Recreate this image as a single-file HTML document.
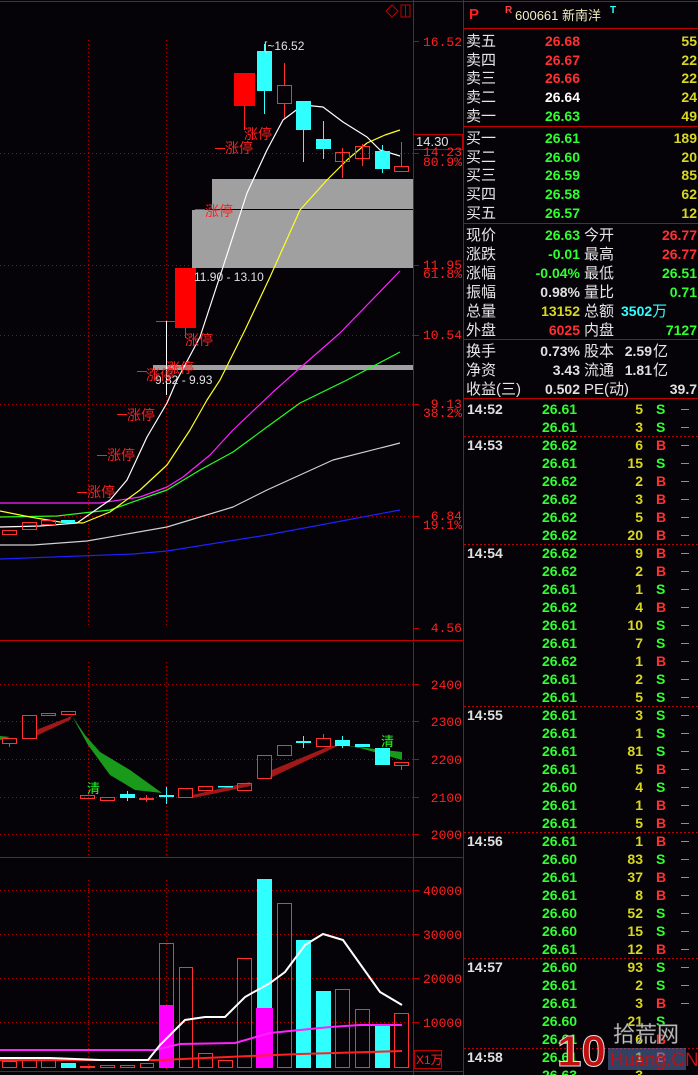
<!DOCTYPE html>
<html><head><meta charset="utf-8"><style>
html,body{margin:0;padding:0;background:#050308;}
svg{display:block}
text{font-family:"Liberation Sans","WenQuanYi Zen Hei",sans-serif;}
.cn{font-family:"WenQuanYi Zen Hei","Noto Sans CJK SC",sans-serif;font-size:15px;fill:#e6e6e6}
.n{font-family:"Liberation Sans",sans-serif;font-weight:bold;font-size:14px}
.ax{font-family:"Liberation Mono",monospace;font-size:13px;fill:#ff2020}
.zt{font-family:"WenQuanYi Zen Hei","Noto Sans CJK SC",sans-serif;font-size:14px;fill:#ff2020}
</style></head><body>
<svg width="698" height="1075" viewBox="0 0 698 1075" xmlns="http://www.w3.org/2000/svg">
<rect width="698" height="1075" fill="#050308"/>
<g stroke="#c00000" stroke-width="1" fill="none">
<line x1="0" y1="1.5" x2="698" y2="1.5"/>
<line x1="413.5" y1="0" x2="413.5" y2="1075"/>
<line x1="463.5" y1="0" x2="463.5" y2="1075"/>
<line x1="0" y1="640.5" x2="463" y2="640.5"/>
<line x1="0" y1="857.5" x2="463" y2="857.5"/>
<line x1="0" y1="1071.5" x2="463" y2="1071.5"/>
</g>
<g stroke="#b00000" stroke-width="1" stroke-dasharray="1,3" fill="none">
<line x1="0" y1="153.5" x2="413" y2="153.5"/>
<line x1="0" y1="265.5" x2="413" y2="265.5"/>
<line x1="0" y1="335.5" x2="413" y2="335.5"/>
<line x1="0" y1="404.5" x2="413" y2="404.5"/>
<line x1="0" y1="516.5" x2="413" y2="516.5"/>
<line x1="88.5" y1="40" x2="88.5" y2="625"/>
<line x1="166.5" y1="40" x2="166.5" y2="625"/>
<line x1="0" y1="684.5" x2="413" y2="684.5"/>
<line x1="0" y1="721.5" x2="413" y2="721.5"/>
<line x1="0" y1="759.5" x2="413" y2="759.5"/>
<line x1="0" y1="797.5" x2="413" y2="797.5"/>
<line x1="0" y1="834.5" x2="413" y2="834.5"/>
<line x1="88.5" y1="662" x2="88.5" y2="855"/>
<line x1="166.5" y1="662" x2="166.5" y2="855"/>
<line x1="0" y1="890.5" x2="413" y2="890.5"/>
<line x1="0" y1="934.5" x2="413" y2="934.5"/>
<line x1="0" y1="978.5" x2="413" y2="978.5"/>
<line x1="0" y1="1022.5" x2="413" y2="1022.5"/>
<line x1="88.5" y1="880" x2="88.5" y2="1070"/>
<line x1="166.5" y1="880" x2="166.5" y2="1070"/>
</g>
<path d="M392 5 L398 11 L392 17 L386 11 Z" stroke="#c00000" fill="none"/>
<rect x="401" y="5" width="9" height="12" stroke="#c00000" fill="none"/><line x1="405.5" y1="5" x2="405.5" y2="17" stroke="#c00000"/>
<g stroke="#c00000"><line x1="413" y1="41.5" x2="419" y2="41.5"/><line x1="413" y1="153.5" x2="419" y2="153.5"/><line x1="413" y1="265.5" x2="419" y2="265.5"/><line x1="413" y1="335.5" x2="419" y2="335.5"/><line x1="413" y1="404.5" x2="419" y2="404.5"/><line x1="413" y1="516.5" x2="419" y2="516.5"/><line x1="413" y1="628.5" x2="419" y2="628.5"/></g>
<text class="ax" x="462" y="46" text-anchor="end">16.52</text>
<rect x="413.5" y="134.5" width="49" height="15" fill="#050308" stroke="#c00000"/>
<text x="416" y="146" font-family="Liberation Mono" font-size="13" fill="#e0e0e0">14.30</text>
<text class="ax" x="462" y="156" text-anchor="end">14.23</text>
<text class="ax" x="462" y="166" text-anchor="end">80.9%</text>
<text class="ax" x="462" y="269" text-anchor="end">11.95</text>
<text class="ax" x="462" y="278" text-anchor="end">61.8%</text>
<text class="ax" x="462" y="339" text-anchor="end">10.54</text>
<text class="ax" x="462" y="408" text-anchor="end">9.13</text>
<text class="ax" x="462" y="417" text-anchor="end">38.2%</text>
<text class="ax" x="462" y="520" text-anchor="end">6.84</text>
<text class="ax" x="462" y="529" text-anchor="end">19.1%</text>
<text class="ax" x="462" y="632" text-anchor="end">4.56</text>
<rect x="212" y="179" width="201" height="30" fill="#a0a0a0"/>
<line x1="195" y1="209.5" x2="413" y2="209.5" stroke="#000"/>
<rect x="192" y="210" width="221" height="58" fill="#a0a0a0"/>
<rect x="153" y="365" width="260" height="5" fill="#a0a0a0"/>
<g fill="none" stroke-width="1.2" stroke-linejoin="round">
<polyline stroke="#2020ff" points="0,559 133,554 167,551 267,535 400,510"/>
<polyline stroke="#d0d0d0" points="0,545 33,545 87,541 167,527 233,507 267,490 333,460 400,443"/>
<polyline stroke="#22ff22" points="0,517 57,516 83,513 110,510 167,490 200,470 233,452 267,427 300,403 347,380 400,352"/>
<polyline stroke="#ff22ff" points="0,503 100,503 140,497 167,487 183,477 210,455 233,430 273,392 300,368 340,333 400,271"/>
<polyline stroke="#ffff20" points="0,511 30,517 60,522 83,523 110,512 140,490 167,465 190,430 207,400 220,380 245,330 270,277 300,210 327,180 347,160 367,143 385,135 400,130"/>
<polyline stroke="#ffffff" points="0,527 40,526 77,523 110,500 127,480 147,437 167,403 177,380 200,337 223,267 247,193 267,150 283,120 303,105 323,107 343,122 367,137 380,150 400,156"/>
</g>
<g stroke="#ff3030" fill="none"><rect x="2.5" y="530.5" width="14" height="4"/><rect x="22.5" y="522.5" width="14" height="7"/><rect x="41.5" y="520.5" width="14" height="4"/></g>
<rect x="61" y="520" width="14" height="3" fill="#30ffff"/>
<line x1="244.5" y1="106" x2="244.5" y2="130" stroke="#ff2020"/>
<rect x="234" y="73" width="21" height="33" fill="#ff0000"/>
<line x1="264.5" y1="44" x2="264.5" y2="114" stroke="#30ffff"/>
<rect x="257" y="51" width="15" height="40" fill="#30ffff"/>
<line x1="284.5" y1="63" x2="284.5" y2="118" stroke="#ff3030"/>
<rect x="277.5" y="85.5" width="14" height="18" fill="#050308" stroke="#ff3030"/>
<line x1="303.5" y1="101" x2="303.5" y2="162" stroke="#30ffff"/>
<rect x="296" y="101" width="15" height="29" fill="#30ffff"/>
<line x1="323.5" y1="121" x2="323.5" y2="159" stroke="#30ffff"/>
<rect x="316" y="139" width="15" height="10" fill="#30ffff"/>
<line x1="342.5" y1="148" x2="342.5" y2="178" stroke="#ff3030"/>
<rect x="335.5" y="152.5" width="14" height="9" fill="none" stroke="#ff3030"/>
<line x1="362.5" y1="144" x2="362.5" y2="166" stroke="#ff3030"/>
<rect x="355.5" y="146.5" width="14" height="12" fill="none" stroke="#ff3030"/>
<line x1="382.5" y1="145" x2="382.5" y2="173" stroke="#30ffff"/>
<rect x="375" y="151" width="15" height="18" fill="#30ffff"/>
<line x1="401.5" y1="142" x2="401.5" y2="166" stroke="#ff3030"/>
<rect x="394.5" y="166.5" width="14" height="5" fill="none" stroke="#ff3030"/>
<rect x="175" y="268" width="21" height="60" fill="#ff0000"/>
<line x1="185.5" y1="328" x2="185.5" y2="338" stroke="#ff2020"/>
<line x1="156" y1="321.5" x2="175" y2="321.5" stroke="#ff2020"/>
<line x1="166.5" y1="321" x2="166.5" y2="395" stroke="#ffffff"/>
<text x="264" y="50" font-family="Liberation Mono" font-size="12" fill="#e0e0e0">[~16.52</text>
<text x="194" y="281" font-family="Liberation Mono" font-size="12" fill="#e0e0e0">11.90 - 13.10</text>
<text x="155" y="384" font-family="Liberation Mono" font-size="12" fill="#e0e0e0">9.82 - 9.93</text>
<text class="zt" x="244" y="139">涨停</text>
<g stroke="#ff2020"><line x1="215" y1="148.5" x2="225" y2="148.5"/><line x1="195" y1="209.5" x2="205" y2="209.5"/><line x1="137" y1="371.5" x2="147" y2="371.5"/><line x1="117" y1="414.5" x2="127" y2="414.5"/><line x1="97" y1="455.5" x2="107" y2="455.5"/><line x1="77" y1="492.5" x2="87" y2="492.5"/></g>
<text class="zt" x="225" y="153">涨停</text>
<text class="zt" x="205" y="216">涨停</text>
<text class="zt" x="185" y="345">涨停</text>
<text class="zt" x="166" y="373">涨停</text>
<text class="zt" x="146" y="380">涨停</text>
<text class="zt" x="127" y="420">涨停</text>
<text class="zt" x="107" y="460">涨停</text>
<text class="zt" x="87" y="497">涨停</text>
<g stroke="#c00000"><line x1="413" y1="684.5" x2="419" y2="684.5"/><line x1="413" y1="721.5" x2="419" y2="721.5"/><line x1="413" y1="759.5" x2="419" y2="759.5"/><line x1="413" y1="797.5" x2="419" y2="797.5"/><line x1="413" y1="834.5" x2="419" y2="834.5"/></g>
<text class="ax" x="462" y="689" text-anchor="end">2400</text>
<text class="ax" x="462" y="726" text-anchor="end">2300</text>
<text class="ax" x="462" y="764" text-anchor="end">2200</text>
<text class="ax" x="462" y="802" text-anchor="end">2100</text>
<text class="ax" x="462" y="839" text-anchor="end">2000</text>
<polygon fill="#1a9a1a" points="72,716 85,735 100,752 130,770 162,793 135,790 110,775 88,745"/>
<polygon fill="#1a9a1a" points="0,736 10,737 0,740"/>
<polygon fill="#a01818" points="36,730 72,716 70,720 36,736"/>
<polygon fill="#a01818" points="192,795 250,782 251,786 193,798"/>
<polygon fill="#a01818" points="270,778 340,745 330,746 272,770"/>
<polygon fill="#1a9a1a" points="340,745 402,752 402,760 360,748"/>
<g stroke="#ff3030" fill="none">
<rect x="2.5" y="738.5" width="14" height="5"/><rect x="22.5" y="715.5" width="14" height="23"/><rect x="41.5" y="713.5" width="14" height="2"/><rect x="61.5" y="711.5" width="14" height="3"/>
<rect x="80.5" y="795.5" width="14" height="3"/><rect x="100.5" y="797.5" width="14" height="3"/><rect x="139.5" y="798.5" width="14" height="1"/>
<rect x="178.5" y="788.5" width="14" height="9"/><rect x="198.5" y="786.5" width="14" height="4"/><rect x="237.5" y="783.5" width="14" height="7"/>
<rect x="257.5" y="755.5" width="14" height="23"/><rect x="277.5" y="745.5" width="14" height="10"/><rect x="316.5" y="738.5" width="14" height="8"/><rect x="394.5" y="762.5" width="14" height="3"/>
<line x1="9.5" y1="743" x2="9.5" y2="747"/><line x1="146.5" y1="795" x2="146.5" y2="802"/><line x1="323.5" y1="734" x2="323.5" y2="738"/><line x1="401.5" y1="765" x2="401.5" y2="770"/>
</g>
<g fill="#30ffff"><rect x="120" y="794" width="15" height="4"/><rect x="159" y="795" width="15" height="2"/><rect x="296" y="741" width="15" height="2"/><rect x="335" y="740" width="15" height="6"/><rect x="355" y="744" width="15" height="3"/><rect x="375" y="748" width="15" height="17"/><rect x="218" y="786" width="15" height="1.5"/></g>
<g stroke="#30ffff"><line x1="166.5" y1="787" x2="166.5" y2="804"/><line x1="303.5" y1="736" x2="303.5" y2="748"/><line x1="342.5" y1="736" x2="342.5" y2="748"/><line x1="127.5" y1="791" x2="127.5" y2="801"/></g>
<text x="87" y="793" font-family="WenQuanYi Zen Hei,sans-serif" font-size="13" fill="#22ff22">清</text>
<text x="381" y="746" font-family="WenQuanYi Zen Hei,sans-serif" font-size="13" fill="#22ff22">清</text>
<g stroke="#c00000"><line x1="413" y1="890.5" x2="419" y2="890.5"/><line x1="413" y1="934.5" x2="419" y2="934.5"/><line x1="413" y1="978.5" x2="419" y2="978.5"/><line x1="413" y1="1022.5" x2="419" y2="1022.5"/></g>
<text class="ax" x="462" y="895" text-anchor="end">40000</text>
<text class="ax" x="462" y="939" text-anchor="end">30000</text>
<text class="ax" x="462" y="983" text-anchor="end">20000</text>
<text class="ax" x="462" y="1027" text-anchor="end">10000</text>
<rect x="414.5" y="1050.5" width="27" height="18" fill="none" stroke="#c00000"/>
<text x="416" y="1064" font-family="Liberation Mono,WenQuanYi Zen Hei,sans-serif" font-size="12" fill="#ff2020">X1万</text>
<g fill="#30ffff"><rect x="61" y="1063" width="15" height="5"/><rect x="257" y="879" width="15" height="189"/><rect x="296" y="940" width="15" height="128"/><rect x="316" y="991" width="15" height="77"/><rect x="375" y="1025" width="15" height="43"/></g>
<g fill="#ff00ff"><rect x="159" y="1005" width="15" height="63"/><rect x="256" y="1008" width="17" height="60"/></g>
<g stroke="#ff3030" fill="none">
<rect x="2.5" y="1061.5" width="14" height="6"/><rect x="22.5" y="1057.5" width="14" height="10"/><rect x="41.5" y="1060.5" width="14" height="7"/>
<rect x="80.5" y="1066.5" width="14" height="1"/><rect x="100.5" y="1065.5" width="14" height="2"/><rect x="120.5" y="1065.5" width="14" height="2"/><rect x="140.5" y="1063.5" width="13" height="4"/>
<rect x="159.5" y="943.5" width="14" height="124"/><rect x="179.5" y="967.5" width="13" height="100"/><rect x="198.5" y="1053.5" width="14" height="14"/><rect x="218.5" y="1060.5" width="14" height="7"/>
<rect x="237.5" y="958.5" width="14" height="109"/><rect x="277.5" y="903.5" width="14" height="164"/><rect x="335.5" y="989.5" width="14" height="78"/><rect x="355.5" y="1009.5" width="14" height="58"/><rect x="394.5" y="1013.5" width="14" height="54"/>
</g>
<g fill="none" stroke-width="2">
<polyline stroke="#ff2020" points="0,1060 160,1060 250,1056 300,1054 402,1051"/>
<polyline stroke="#ff22ff" points="0,1050 155,1050 180,1044 235,1043 270,1033 300,1030 330,1027 360,1025 402,1025"/>
<polyline stroke="#ffffff" points="0,1058 50,1058 100,1060 148,1060 160,1045 185,1020 205,1017 225,1017 245,997 270,983 285,972 305,945 323,934 343,940 380,992 402,1005"/>
</g>
<g stroke="#c00000"><line x1="463" y1="28.5" x2="698" y2="28.5"/><line x1="463" y1="126.5" x2="698" y2="126.5"/><line x1="463" y1="223.5" x2="698" y2="223.5"/><line x1="463" y1="339.5" x2="698" y2="339.5"/><line x1="463" y1="398.5" x2="698" y2="398.5"/></g>
<g stroke="#c00000" stroke-dasharray="2,2"><line x1="464" y1="436.5" x2="698" y2="436.5"/><line x1="464" y1="544.5" x2="698" y2="544.5"/><line x1="464" y1="706.5" x2="698" y2="706.5"/><line x1="464" y1="832.5" x2="698" y2="832.5"/><line x1="464" y1="958.5" x2="698" y2="958.5"/><line x1="464" y1="1048.5" x2="698" y2="1048.5"/></g>
<text x="469" y="19" font-family="Liberation Serif" font-weight="bold" font-size="15" fill="#ff2020">P</text>
<text x="505" y="13" font-size="10" font-weight="bold" fill="#ff4040">R</text>
<text x="515" y="20" font-family="Liberation Sans,WenQuanYi Zen Hei,sans-serif" font-size="13" fill="#f0f0c0">600661 新南洋</text>
<text x="610" y="13" font-size="10" font-weight="bold" fill="#30ffff">T</text>
<g class="cn">
<text x="466" y="46">卖五</text><text x="466" y="65">卖四</text><text x="466" y="83">卖三</text><text x="466" y="102">卖二</text><text x="466" y="121">卖一</text>
<text x="466" y="143">买一</text><text x="466" y="162">买二</text><text x="466" y="180">买三</text><text x="466" y="199">买四</text><text x="466" y="218">买五</text>
<text x="466" y="240">现价</text><text x="466" y="259">涨跌</text><text x="466" y="278">涨幅</text><text x="466" y="297">振幅</text><text x="466" y="316">总量</text><text x="466" y="335">外盘</text>
<text x="584" y="240">今开</text><text x="584" y="259">最高</text><text x="584" y="278">最低</text><text x="584" y="297">量比</text><text x="584" y="316">总额</text><text x="584" y="335">内盘</text>
<text x="466" y="356">换手</text><text x="466" y="375">净资</text><text x="466" y="394">收益(三)</text>
<text x="584" y="356">股本</text><text x="584" y="375">流通</text><text x="584" y="394" font-family="Liberation Sans,WenQuanYi Zen Hei,sans-serif">PE(动)</text>
</g>
<g class="n" text-anchor="end">
<text x="580" y="46" fill="#ff3030">26.68</text><text x="580" y="65" fill="#ff3030">26.67</text><text x="580" y="83" fill="#ff3030">26.66</text><text x="580" y="102" fill="#ffffff">26.64</text><text x="580" y="121" fill="#30ff30">26.63</text>
<text x="580" y="143" fill="#30ff30">26.61</text><text x="580" y="162" fill="#30ff30">26.60</text><text x="580" y="180" fill="#30ff30">26.59</text><text x="580" y="199" fill="#30ff30">26.58</text><text x="580" y="218" fill="#30ff30">26.57</text>
<g fill="#d8d820"><text x="697" y="46">55</text><text x="697" y="65">22</text><text x="697" y="83">22</text><text x="697" y="102">24</text><text x="697" y="121">49</text><text x="697" y="143">189</text><text x="697" y="162">20</text><text x="697" y="180">85</text><text x="697" y="199">62</text><text x="697" y="218">12</text></g>
<text x="580" y="240" fill="#30ff30">26.63</text><text x="580" y="259" fill="#30ff30">-0.01</text><text x="580" y="278" fill="#30ff30">-0.04%</text><text x="580" y="297" fill="#e0e0e0">0.98%</text><text x="580" y="316" fill="#d8d820">13152</text><text x="580" y="335" fill="#ff3030">6025</text>
<text x="697" y="240" fill="#ff3030">26.77</text><text x="697" y="259" fill="#ff3030">26.77</text><text x="697" y="278" fill="#30ff30">26.51</text><text x="697" y="297" fill="#30ff30">0.71</text><text x="697" y="335" fill="#30ff30">7127</text>
<text x="580" y="356" fill="#e0e0e0">0.73%</text><text x="580" y="375" fill="#e0e0e0">3.43</text><text x="580" y="394" fill="#e0e0e0">0.502</text>
<text x="697" y="394" fill="#e0e0e0">39.7</text>
</g>
<text x="621" y="316" class="n" fill="#30ffff">3502<tspan font-family="WenQuanYi Zen Hei" font-weight="normal" font-size="15">万</tspan></text>
<text x="652" y="356" class="n" text-anchor="end" fill="#e0e0e0">2.59</text><text x="653" y="356" class="cn">亿</text>
<text x="652" y="375" class="n" text-anchor="end" fill="#e0e0e0">1.81</text><text x="653" y="375" class="cn">亿</text>
<g class="n" fill="#e0e0e0"><text x="467" y="414">14:52</text><text x="467" y="450">14:53</text><text x="467" y="558">14:54</text><text x="467" y="720">14:55</text><text x="467" y="846">14:56</text><text x="467" y="972">14:57</text><text x="467" y="1062">14:58</text></g>
<g class="n" fill="#30ff30">
<text x="542" y="414">26.61</text><text x="542" y="432">26.61</text><text x="542" y="450">26.62</text><text x="542" y="468">26.61</text><text x="542" y="486">26.62</text><text x="542" y="504">26.62</text><text x="542" y="522">26.62</text><text x="542" y="540">26.62</text>
<text x="542" y="558">26.62</text><text x="542" y="576">26.62</text><text x="542" y="594">26.61</text><text x="542" y="612">26.62</text><text x="542" y="630">26.61</text><text x="542" y="648">26.61</text><text x="542" y="666">26.62</text><text x="542" y="684">26.61</text><text x="542" y="702">26.61</text>
<text x="542" y="720">26.61</text><text x="542" y="738">26.61</text><text x="542" y="756">26.61</text><text x="542" y="774">26.61</text><text x="542" y="792">26.60</text><text x="542" y="810">26.61</text><text x="542" y="828">26.61</text>
<text x="542" y="846">26.61</text><text x="542" y="864">26.60</text><text x="542" y="882">26.61</text><text x="542" y="900">26.61</text><text x="542" y="918">26.60</text><text x="542" y="936">26.60</text><text x="542" y="954">26.61</text>
<text x="542" y="972">26.60</text><text x="542" y="990">26.61</text><text x="542" y="1008">26.61</text><text x="542" y="1026">26.60</text><text x="542" y="1044">26.61</text><text x="542" y="1062">26.61</text><text x="542" y="1080">26.63</text>
</g>
<g class="n" fill="#d8d820" text-anchor="end">
<text x="643" y="414">5</text><text x="643" y="432">3</text><text x="643" y="450">6</text><text x="643" y="468">15</text><text x="643" y="486">2</text><text x="643" y="504">3</text><text x="643" y="522">5</text><text x="643" y="540">20</text>
<text x="643" y="558">9</text><text x="643" y="576">2</text><text x="643" y="594">1</text><text x="643" y="612">4</text><text x="643" y="630">10</text><text x="643" y="648">7</text><text x="643" y="666">1</text><text x="643" y="684">2</text><text x="643" y="702">5</text>
<text x="643" y="720">3</text><text x="643" y="738">1</text><text x="643" y="756">81</text><text x="643" y="774">5</text><text x="643" y="792">4</text><text x="643" y="810">1</text><text x="643" y="828">5</text>
<text x="643" y="846">1</text><text x="643" y="864">83</text><text x="643" y="882">37</text><text x="643" y="900">8</text><text x="643" y="918">52</text><text x="643" y="936">15</text><text x="643" y="954">12</text>
<text x="643" y="972">93</text><text x="643" y="990">2</text><text x="643" y="1008">3</text><text x="643" y="1026">21</text><text x="643" y="1044">6</text><text x="643" y="1062">1</text><text x="643" y="1080">3</text>
</g>
<g class="n">
<text x="656" y="414" fill="#30ff30">S</text><text x="656" y="432" fill="#30ff30">S</text><text x="656" y="450" fill="#ff3030">B</text><text x="656" y="468" fill="#30ff30">S</text><text x="656" y="486" fill="#ff3030">B</text><text x="656" y="504" fill="#ff3030">B</text><text x="656" y="522" fill="#ff3030">B</text><text x="656" y="540" fill="#ff3030">B</text>
<text x="656" y="558" fill="#ff3030">B</text><text x="656" y="576" fill="#ff3030">B</text><text x="656" y="594" fill="#30ff30">S</text><text x="656" y="612" fill="#ff3030">B</text><text x="656" y="630" fill="#30ff30">S</text><text x="656" y="648" fill="#30ff30">S</text><text x="656" y="666" fill="#ff3030">B</text><text x="656" y="684" fill="#30ff30">S</text><text x="656" y="702" fill="#30ff30">S</text>
<text x="656" y="720" fill="#30ff30">S</text><text x="656" y="738" fill="#30ff30">S</text><text x="656" y="756" fill="#30ff30">S</text><text x="656" y="774" fill="#ff3030">B</text><text x="656" y="792" fill="#30ff30">S</text><text x="656" y="810" fill="#ff3030">B</text><text x="656" y="828" fill="#ff3030">B</text>
<text x="656" y="846" fill="#ff3030">B</text><text x="656" y="864" fill="#30ff30">S</text><text x="656" y="882" fill="#ff3030">B</text><text x="656" y="900" fill="#ff3030">B</text><text x="656" y="918" fill="#30ff30">S</text><text x="656" y="936" fill="#30ff30">S</text><text x="656" y="954" fill="#ff3030">B</text>
<text x="656" y="972" fill="#30ff30">S</text><text x="656" y="990" fill="#30ff30">S</text><text x="656" y="1008" fill="#ff3030">B</text><text x="656" y="1026" fill="#30ff30">S</text><text x="656" y="1044" fill="#ff3030">B</text><text x="656" y="1062" fill="#ff3030">B</text>
</g>
<g stroke="#909090"><line x1="681" y1="409.5" x2="689" y2="409.5"/><line x1="681" y1="427.5" x2="689" y2="427.5"/><line x1="681" y1="445.5" x2="689" y2="445.5"/><line x1="681" y1="463.5" x2="689" y2="463.5"/><line x1="681" y1="481.5" x2="689" y2="481.5"/><line x1="681" y1="499.5" x2="689" y2="499.5"/><line x1="681" y1="517.5" x2="689" y2="517.5"/><line x1="681" y1="535.5" x2="689" y2="535.5"/><line x1="681" y1="553.5" x2="689" y2="553.5"/><line x1="681" y1="571.5" x2="689" y2="571.5"/><line x1="681" y1="589.5" x2="689" y2="589.5"/><line x1="681" y1="607.5" x2="689" y2="607.5"/><line x1="681" y1="625.5" x2="689" y2="625.5"/><line x1="681" y1="643.5" x2="689" y2="643.5"/><line x1="681" y1="661.5" x2="689" y2="661.5"/><line x1="681" y1="679.5" x2="689" y2="679.5"/><line x1="681" y1="697.5" x2="689" y2="697.5"/><line x1="681" y1="715.5" x2="689" y2="715.5"/><line x1="681" y1="733.5" x2="689" y2="733.5"/><line x1="681" y1="751.5" x2="689" y2="751.5"/><line x1="681" y1="769.5" x2="689" y2="769.5"/><line x1="681" y1="787.5" x2="689" y2="787.5"/><line x1="681" y1="805.5" x2="689" y2="805.5"/><line x1="681" y1="823.5" x2="689" y2="823.5"/><line x1="681" y1="841.5" x2="689" y2="841.5"/><line x1="681" y1="859.5" x2="689" y2="859.5"/><line x1="681" y1="877.5" x2="689" y2="877.5"/><line x1="681" y1="895.5" x2="689" y2="895.5"/><line x1="681" y1="913.5" x2="689" y2="913.5"/><line x1="681" y1="931.5" x2="689" y2="931.5"/><line x1="681" y1="949.5" x2="689" y2="949.5"/><line x1="681" y1="967.5" x2="689" y2="967.5"/><line x1="681" y1="985.5" x2="689" y2="985.5"/><line x1="681" y1="1003.5" x2="689" y2="1003.5"/></g>
<text x="557" y="1066" font-family="Liberation Sans" font-weight="bold" font-size="44" fill="#c01010" stroke="#e0e0e0" stroke-width="1">10</text>
<text x="613" y="1042" font-family="WenQuanYi Zen Hei,sans-serif" font-size="22" fill="#c8c8c8" stroke="#555" stroke-width="0.5">拾荒网</text>
<rect x="608" y="1048" width="78" height="22" fill="#6080c0" opacity="0.5"/>
<text x="610" y="1066" font-family="Liberation Sans" font-size="19" fill="#c01010">Huang.CN</text>
</svg>
</body></html>
